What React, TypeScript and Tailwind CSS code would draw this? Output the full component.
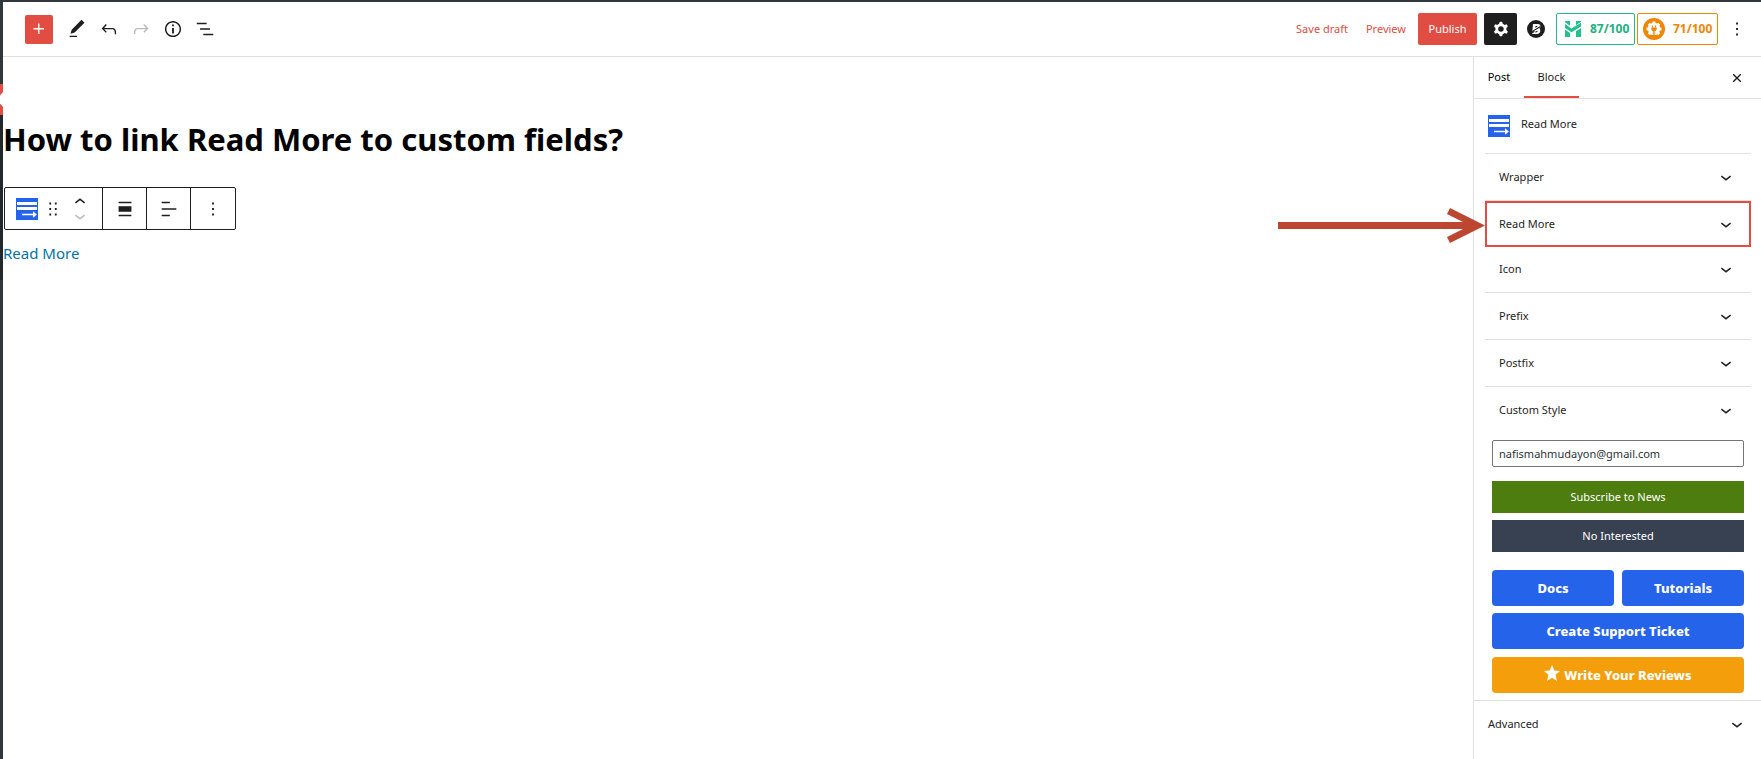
import { useState } from "react";
import type { ReactNode } from "react";

const PATHS = {
  plus: "M11 12.5V17.5H12.5V12.5H17.5V11H12.5V6H11V11H6V12.5H11Z",
  edit: "M20.1 5.1L16.9 2 6.2 12.7l-1.3 4.4 4.5-1.3L20.1 5.1zM4 20.8h8v-1.5H4v1.5z",
  undo: "M18.3 11.7c-.6-.6-1.4-.9-2.3-.9H6.7l2.9-3.3-1.1-1-4.5 5L8.5 16l1-1-2.7-2.7H16c.5 0 .9.2 1.3.5 1 1 1 3.4 1 4.5v.3h1.5v-.2c0-1.5 0-4.3-1.5-5.7z",
  redo: "M15.6 6.5l-1.1 1 2.9 3.3H8c-.9 0-1.7.3-2.3.9-1.4 1.5-1.4 4.2-1.4 5.6v.2h1.5v-.3c0-1.1 0-3.5 1-4.5.3-.3.7-.5 1.3-.5h9.2L14.5 15l1.1 1.1 4.6-4.6-4.6-5z",
  info: "M12 3.2c-4.8 0-8.8 3.9-8.8 8.8 0 4.8 3.9 8.8 8.8 8.8 4.8 0 8.8-3.9 8.8-8.8 0-4.8-4-8.8-8.8-8.8zm0 16c-4 0-7.2-3.3-7.2-7.2C4.8 8 8 4.8 12 4.8s7.2 3.3 7.2 7.2c0 4-3.2 7.2-7.2 7.2zM11 17h2v-6h-2v6zm0-8h2V7h-2v2z",
  list: "M13.8 5.2H3v1.5h10.8V5.2zm-3.6 12v1.5H21v-1.5H10.2zm7.2-6H6.6v1.5h10.8v-1.5z",
  more: "M13 19h-2v-2h2v2zm0-6h-2v-2h2v2zm0-6h-2V5h2v2z",
  down: "M17.5 11.6L12 16l-5.5-4.4.9-1.2L12 14l4.5-3.6 1 1.2z",
  up: "M6.5 12.4L12 8l5.5 4.4-.9 1.2L12 10l-4.5 3.6-1-1.2z",
  drag: "M8 7h2V5H8v2zm0 6h2v-2H8v2zm0 6h2v-2H8v2zm6-14v2h2V5h-2zm0 8h2v-2h-2v2zm0 6h2v-2h-2v2z",
  align: "M5 15h14V9H5v6zm0 4.8h14v-1.5H5v1.5zM5 4.2v1.5h14V4.2H5z",
  alignLeft: "M4 19.8h8.9v-1.5H4v1.5zm8.9-15.6H4v1.5h8.9V4.2zm-8.9 7v1.5h16v-1.5H4z",
  close: "M12 10.3l5.6-5.6 1.7 1.7-5.6 5.6 5.6 5.6-1.7 1.7-5.6-5.6-5.6 5.6-1.7-1.7 5.6-5.6-5.6-5.6 1.7-1.7z",
  cog: "M10.289 4.836A1 1 0 0111.275 4h1.306a1 1 0 01.987.836l.244 1.466c.787.26 1.503.679 2.108 1.218l1.393-.522a1 1 0 011.216.437l.653 1.13a1 1 0 01-.23 1.273l-1.148.944a6.025 6.025 0 010 2.435l1.149.946a1 1 0 01.23 1.272l-.653 1.13a1 1 0 01-1.216.437l-1.394-.522c-.605.54-1.32.958-2.108 1.218l-.244 1.466a1 1 0 01-.987.836h-1.306a1 1 0 01-.986-.836l-.244-1.466a5.995 5.995 0 01-2.108-1.218l-1.394.522a1 1 0 01-1.217-.436l-.653-1.131a1 1 0 01.23-1.272l1.149-.946a6.026 6.026 0 010-2.435l-1.148-.944a1 1 0 01-.23-1.272l.653-1.131a1 1 0 011.217-.437l1.393.522a5.994 5.994 0 012.108-1.218l.244-1.466zM14.929 12a3 3 0 11-6 0 3 3 0 016 0z",
};

function Icon({ name, className = "size-[22px]" }: { name: keyof typeof PATHS; className?: string }) {
  return (
    <svg viewBox="0 0 24 24" className={`shrink-0 ${className}`} fill="currentColor" fillRule="evenodd" aria-hidden="true">
      <path d={PATHS[name]} />
    </svg>
  );
}

function ReadMoreIcon() {
  return (
    <svg viewBox="0 0 22 22" className="size-[22px] shrink-0" aria-hidden="true">
      <rect width="22" height="22" fill="#2563eb" />
      <path d="M1 4h20v3H1zM1 9h20v3H1z" fill="#fff" />
      <path d="M6 16.5h13" stroke="#fff" strokeWidth="1.5" />
      <path d="M17 13.300l4 3.200-4 3.200z" fill="#fff" />
    </svg>
  );
}

function ToolButton({ label, className = "", children }: { label: string; className?: string; children: ReactNode }) {
  return (
    <button type="button" aria-label={label} className={`flex items-center justify-center ${className}`}>
      {children}
    </button>
  );
}

function TopBar() {
  return (
    <header className="flex h-[55px] items-center justify-between border-b border-[#e0e0e0] pl-[22px] pr-[13px]">
      <div className="flex items-center">
        <ToolButton label="Add block" className="mr-[13px] h-[29px] w-7 rounded-xs bg-[#e14d43] text-white">
          <Icon name="plus" />
        </ToolButton>
        <div className="flex items-center gap-[10px]">
          <ToolButton label="Tools"><Icon name="edit" /></ToolButton>
          <ToolButton label="Undo"><Icon name="undo" /></ToolButton>
          <ToolButton label="Redo" className="text-[#bbbbbb]"><Icon name="redo" /></ToolButton>
          <ToolButton label="Details"><Icon name="info" /></ToolButton>
          <ToolButton label="List view"><Icon name="list" /></ToolButton>
        </div>
      </div>
      <div className="flex items-center">
        <button type="button" className="mr-[18px] text-[#e14d43]">Save draft</button>
        <button type="button" className="mr-3 text-[#e14d43]">Preview</button>
        <button type="button" className="mr-[7px] h-8 w-[59px] rounded-xs bg-[#e14d43] text-white">Publish</button>
        <ToolButton label="Settings" className="mr-[10px] h-8 w-[33px] rounded-xs bg-[#1e1e1e] text-white">
          <Icon name="cog" />
        </ToolButton>
        <ToolButton label="Block kit" className="mr-[11px]">
          <svg viewBox="0 0 18 18" className="size-[18px]" aria-hidden="true">
            <circle cx="9" cy="9" r="9" fill="#1e1e1e" />
            <path d="M6 4h5c2.600 0 3.200 3 1.500 4.500 1.600 1.700.8 5.500-2.500 5.500H5z" fill="#fff" />
            <path d="M5 11.600l8.500-5.100M4.500 13.200l3-1.800M8.300 7.300l2-1.200M8.500 12.300l2-1.200" stroke="#1e1e1e" strokeWidth="1.100" />
          </svg>
        </ToolButton>
        <button type="button" className="mr-[2px] flex h-8 w-[79px] items-center rounded-xs border border-[#22bb82] pl-2 text-xs font-bold text-[#22b07d]">
          <svg viewBox="0 0 16 16" className="mr-[9px] size-4 shrink-0" aria-hidden="true">
            <path d="M0 0h5v4.500L3 3.500 0 1zM11 0h5v.8l-5 3.500zM0 3l6.500 4.500L16 1.800V5.500L6.500 11.300 0 7zM0 8.500l5 3.600V16H0zM16 7v9h-5v-5.800z" fill="#22c08a" />
          </svg>
          87/100
        </button>
        <button type="button" className="mr-2 flex h-8 w-[81px] items-center rounded-xs border border-[#f18500] pl-[5px] text-xs font-bold text-[#f18500]">
          <svg viewBox="0 0 22 22" className="mr-2 size-[22px] shrink-0" aria-hidden="true">
            <circle cx="11" cy="11" r="11" fill="#f18500" />
            <circle cx="11" cy="11" r="6.200" fill="#fff" />
            <path
              d="M9.500 3.500h3v3h-3zM15.200 4.700l2.100 2.100-2.100 2.100-2.100-2.100zM6.800 4.700L4.700 6.800l2.100 2.100 2.100-2.100zM3.500 9.500h3v3h-3zM15.500 9.500h3v3h-3zM15.200 17.300l2.100-2.100-2.100-2.100-2.100 2.100zM6.800 17.300l-2.100-2.100 2.100-2.100 2.100 2.100z"
              fill="#fff"
            />
            <path d="M9.500 7.500v2M12.500 7.500v2" stroke="#f18500" strokeWidth="1.200" />
            <path d="M8.300 9.500h5.400v1.200c0 1.400-.8 2.400-2 2.600V18h-1.400v-4.700c-1.200-.2-2-1.200-2-2.600z" fill="#f18500" />
          </svg>
          71/100
        </button>
        <ToolButton label="Options"><Icon name="more" /></ToolButton>
      </div>
    </header>
  );
}

function BlockToolbar() {
  return (
    <div role="toolbar" aria-label="Block tools" className="ml-px mt-[26px] flex h-[43px] w-fit divide-x divide-[#1e1e1e] rounded-xs border border-[#1e1e1e]">
      <div className="flex w-[98px] items-center pl-[11px]">
        <ToolButton label="Read More block"><ReadMoreIcon /></ToolButton>
        <ToolButton label="Drag" className="ml-1"><Icon name="drag" /></ToolButton>
        <div className="ml-[5px] flex flex-col">
          <ToolButton label="Move up" className="h-[14px] overflow-hidden"><Icon name="up" /></ToolButton>
          <ToolButton label="Move down" className="h-[14px] overflow-hidden text-[#bbbbbb]"><Icon name="down" /></ToolButton>
        </div>
      </div>
      <ToolButton label="Align" className="w-11"><Icon name="align" /></ToolButton>
      <ToolButton label="Align text" className="w-11"><Icon name="alignLeft" /></ToolButton>
      <ToolButton label="Options" className="w-11"><Icon name="more" /></ToolButton>
    </div>
  );
}

function PanelRow({ title }: { title: string }) {
  return (
    <button type="button" className="flex h-[46px] w-full items-center justify-between pl-[14px] pr-[14px] text-left">
      {title}
      <Icon name="down" />
    </button>
  );
}

function Arrow() {
  return (
    <svg viewBox="0 0 208 36" className="pointer-events-none absolute right-full top-[7px] h-9 w-52" aria-hidden="true">
      <path d="M1 14h185L170 6l3-6 35 17.500L173 35l-3-6 16-8H1z" fill="#bc4630" />
    </svg>
  );
}

function Sidebar() {
  const [email, setEmail] = useState("nafismahmudayon@gmail.com");
  return (
    <aside className="w-72 shrink-0 border-l border-[#e0e0e0]">
      <div className="flex h-[42px] items-stretch border-b border-[#e0e0e0] pr-[17px]">
        <button type="button" className="w-[50px] text-black">Post</button>
        <button type="button" className="w-[55px] border-b-2 border-[#e14d43] pt-[2px]">Block</button>
        <ToolButton label="Close settings" className="ml-auto"><Icon name="close" className="size-[14px]" /></ToolButton>
      </div>
      <div className="flex h-[54px] items-start pl-[14px] pt-4">
        <ReadMoreIcon />
        <h2 className="ml-[11px] leading-[18px]">Read More</h2>
      </div>
      <div className="ml-[11px] mr-[10px]">
        <div className="border-t border-[#e0e0e0]"><PanelRow title="Wrapper" /></div>
        <div className="border-t border-[#e0e0e0]">
          <div className="relative -mb-px">
            <div className="border-2 border-[#e14d43] *:h-[42px] *:px-3"><PanelRow title="Read More" /></div>
            <Arrow />
          </div>
        </div>
        <PanelRow title="Icon" />
        <div className="border-t border-[#e0e0e0]"><PanelRow title="Prefix" /></div>
        <div className="border-t border-[#e0e0e0]"><PanelRow title="Postfix" /></div>
        <div className="border-t border-[#e0e0e0]"><PanelRow title="Custom Style" /></div>
        <div className="grid gap-[7px] px-[7px] pb-[7px] pt-[7px]">
          <input
            type="email"
            aria-label="Email address"
            value={email}
            onChange={(e) => setEmail(e.target.value)}
            className="mb-[7px] h-[27px] w-full rounded-xs border border-[#757575] px-[6px] text-[#2c3338]"
          />
          <button type="button" className="h-8 bg-[#4d7c0f] text-white">Subscribe to News</button>
          <button type="button" className="mb-[11px] h-8 bg-[#374151] text-white">No Interested</button>
          <div className="grid grid-cols-2 gap-x-2 gap-y-[7px] text-center text-[13px] font-extrabold leading-9 text-white">
            <a href="#docs" className="h-9 rounded-sm bg-[#2563eb]">Docs</a>
            <a href="#tutorials" className="h-9 rounded-sm bg-[#2563eb]">Tutorials</a>
            <a href="#support" className="col-span-2 mb-px h-9 rounded-sm bg-[#2563eb]">Create Support Ticket</a>
            <a href="#reviews" className="col-span-2 flex h-9 items-center justify-center gap-1 rounded-sm bg-[#f59e0b]">
              <svg viewBox="0 0 16 16" className="mb-1 size-4" fill="currentColor" aria-hidden="true">
                <path d="M8 0l2.300 5.500 5.700.5-4.400 3.800L13 16l-5-3.300L3 16l1.400-6.200L0 6l5.700-.5z" />
              </svg>
              Write Your Reviews
            </a>
          </div>
        </div>
      </div>
      <div className="border-t border-[#e0e0e0]">
        <button type="button" className="flex h-[46px] w-full items-center justify-between pl-[14px] pr-[13px] text-left">
          Advanced
          <Icon name="down" />
        </button>
      </div>
    </aside>
  );
}

export default function App() {
  return (
    <div className="flex min-h-screen flex-col border-t-2 border-[#32373c] bg-white font-['Noto_Sans','Open_Sans',sans-serif] text-[11px] text-[#1e1e1e]">
      <div className="flex grow">
        <div className="flex w-[3px] shrink-0 flex-col bg-[#32373c]">
          <svg viewBox="0 0 3 31" className="mt-[82px] h-[31px] w-[3px]" aria-hidden="true">
            <path d="M0 0h3v31H0z" fill="#e14d43" />
            <path d="M3 8L0 11.500v8L3 23z" fill="#fff" />
          </svg>
          <div className="h-[165px] bg-[#23282d]" />
        </div>
        <div className="flex min-w-0 grow flex-col">
          <TopBar />
          <div className="flex grow">
            <main className="min-w-0 grow">
              <h1 className="mt-[60px] text-[31px] font-bold leading-[44px] text-black">How to link Read More to custom fields?</h1>
              <BlockToolbar />
              <p className="mt-[11px] text-[15px] leading-6"><a href="#read-more" className="text-[#0073aa]">Read More</a></p>
            </main>
            <Sidebar />
          </div>
        </div>
      </div>
    </div>
  );
}
